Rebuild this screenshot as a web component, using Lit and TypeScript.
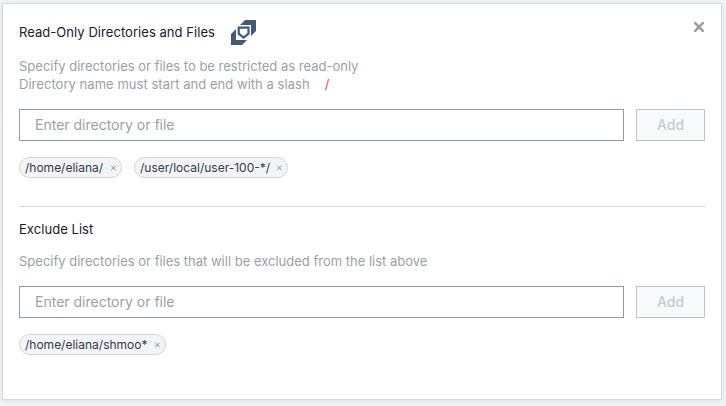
import { LitElement, html, css } from "lit";
import { customElement, property } from "lit/decorators.js";

@customElement("path-chip")
export class PathChip extends LitElement {
  @property() label = "";

  static styles = css`
    :host {
      display: flex;
      align-items: center;
      box-sizing: border-box;
      height: 21px;
      padding: 0 4px 0 5px;
      border: 1px solid #d3d5d8;
      border-radius: 11px;
      background: #f2f4f8;
      color: #343a48;
      font-size: 12px;
      line-height: 19px;
      white-space: nowrap;
    }
    svg {
      margin-left: auto;
      flex: none;
    }
  `;

  render() {
    return html`<span>${this.label}</span>
      <svg width="7" height="7" viewBox="0 0 7 7">
        <path d="M1.2 1.7l4.4 4.4M5.6 1.7l-4.4 4.4" stroke="#747b8b" stroke-width="0.9" />
      </svg>`;
  }
}

@customElement("path-entry")
export class PathEntry extends LitElement {
  static styles = css`
    :host {
      display: flex;
      gap: 12px;
      height: 32px;
    }
    input,
    button {
      box-sizing: border-box;
      margin: 0;
      height: 32px;
      border-radius: 0;
      font-family: inherit;
      font-size: 14px;
    }
    input {
      flex: 1;
      min-width: 0;
      padding: 0 15px 1px;
      border: 1px solid #949ca9;
      background: #fff;
    }
    input::placeholder {
      color: #9b9fa8;
      opacity: 1;
    }
    button {
      width: 69px;
      padding: 0 0 1px;
      border: 1px solid #c0c4ca;
      background: #f8f9fb;
      color: #c5c9cf;
      font-weight: 500;
    }
  `;

  render() {
    return html`<input placeholder="Enter directory or file" /><button disabled>Add</button>`;
  }
}

@customElement("app-root")
export class AppRoot extends LitElement {
  static styles = css`
    :host {
      display: block;
      box-sizing: border-box;
      height: 406px;
      padding: 3px 4px 0 2px;
      background: #f1f3f7;
      font-family: Inter, "Liberation Sans", sans-serif;
      overflow: hidden;
    }
    .card {
      box-sizing: border-box;
      height: 397px;
      padding: 15px 16px 0;
      border: 1px solid #d6d8db;
      background: #fff;
      box-shadow: 0 1px 5px rgba(60, 75, 100, 0.1);
    }
    .head {
      display: flex;
      align-items: flex-start;
      height: 38px;
    }
    h2 {
      margin: 0;
      font-size: 13px;
      font-weight: 400;
      letter-spacing: 0.05px;
      line-height: 18px;
      color: #14202c;
      white-space: nowrap;
    }
    .head h2 {
      width: 212px;
      margin-top: 4px;
    }
    .logo {
      margin-top: 1px;
      flex: none;
    }
    .close {
      margin: 2px 0 0 auto;
      flex: none;
    }
    p {
      margin: 0;
      font-size: 13px;
      line-height: 18px;
      color: #9b9fa8;
      white-space: nowrap;
    }
    .rule {
      letter-spacing: 0.04px;
    }
    .slash {
      margin-left: 15px;
      color: #f2386b;
    }
    .first {
      margin-top: 16px;
    }
    .second {
      margin-top: 16px;
    }
    .chips {
      display: flex;
      gap: 12px;
      margin-top: 16px;
    }
    .w1 {
      width: 103px;
    }
    .w2 {
      width: 154px;
    }
    .w3 {
      width: 147px;
    }
    hr {
      height: 1px;
      margin: 28px 0 13px;
      border: 0;
      background: #d6d8db;
    }
    .desc {
      margin-top: 14px;
    }
  `;

  render() {
    return html`
      <div class="card">
        <div class="head">
          <h2>Read-Only Directories and Files</h2>
          <svg class="logo" width="25" height="25" viewBox="0 0 25 25" fill="#425a76">
            <path d="M9 5L14 0h11v11l-5 5V5z" />
            <path d="M0 14l5-5v11h11l-5 5H0z" />
            <path
              fill-rule="evenodd"
              d="M6.6 6.6h12v7.6l-6 4.8-6-4.8zM8.8 8.8v4.3l3.8 3.2 3.8-3.2V8.8z"
            />
          </svg>
          <svg class="close" width="12" height="12" viewBox="0 0 12 12">
            <path
              d="M2.2 2.2l7.6 7.6M9.8 2.2L2.2 9.8"
              stroke="#949ba8"
              stroke-width="2.5"
              stroke-linecap="round"
            />
          </svg>
        </div>
        <p>Specify directories or files to be restricted as read-only</p>
        <p class="rule">
          Directory name must start and end with a slash<span class="slash">/</span>
        </p>
        <path-entry class="first"></path-entry>
        <div class="chips">
          <path-chip class="w1" label="/home/eliana/"></path-chip>
          <path-chip class="w2" label="/user/local/user-100-*/"></path-chip>
        </div>
        <hr />
        <h2>Exclude List</h2>
        <p class="desc">Specify directories or files that will be excluded from the list above</p>
        <path-entry class="second"></path-entry>
        <div class="chips">
          <path-chip class="w3" label="/home/eliana/shmoo*"></path-chip>
        </div>
      </div>
    `;
  }
}
